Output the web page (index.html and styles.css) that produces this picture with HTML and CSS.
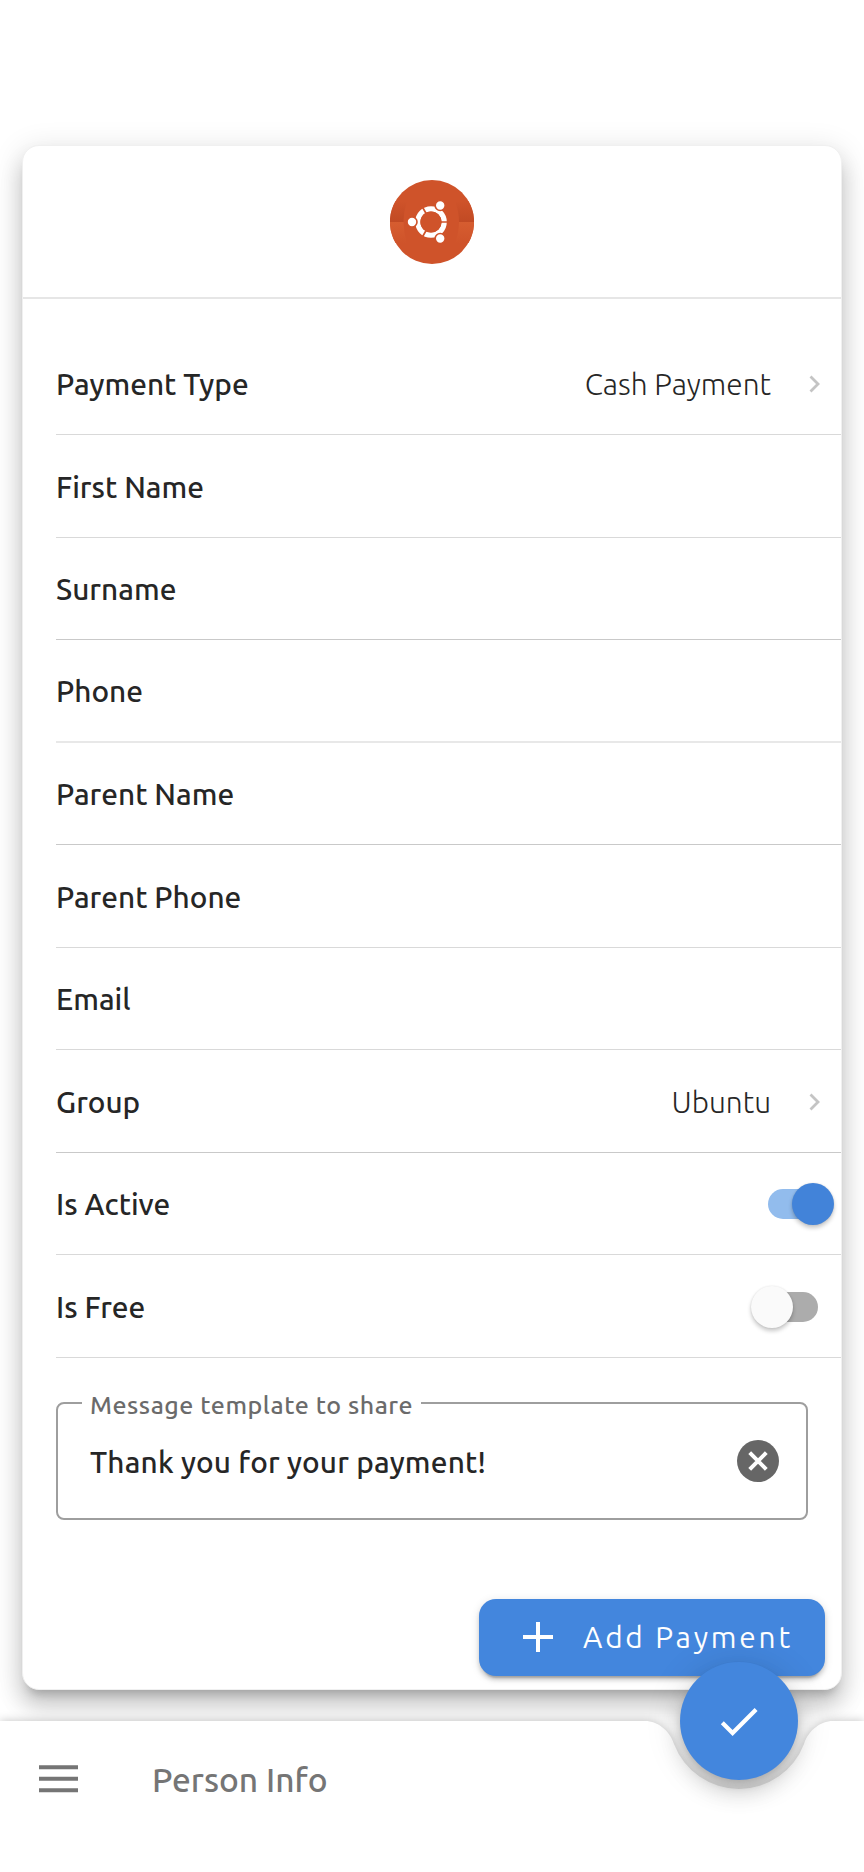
FILE: index.html
```html
<!DOCTYPE html>
<html lang="en">
<head>
<meta charset="utf-8">
<title>Person Info</title>
<link rel="stylesheet" href="styles.css">
</head>
<body>
<div class="screen">
  <main class="card">
    <header class="card-header">
      <svg class="avatar" viewBox="0 0 84 84">
        <defs>
          <linearGradient id="side" x1="0" y1="0" x2="0" y2="1">
            <stop offset="0" stop-color="#cf532a"/><stop offset=".5" stop-color="#c14a24"/>
            <stop offset=".5" stop-color="#d65d30"/><stop offset="1" stop-color="#cf532a"/>
          </linearGradient>
        </defs>
        <circle cx="42" cy="42" r="42" fill="#cf532a"/>
        <path d="M5.500 21H17Q10 42 17 63H5.500A42 42 0 0 1 5.500 21ZM78.500 21H65Q73 42 65 63H78.500A42 42 0 0 0 78.500 21Z" fill="url(#side)"/>
        <circle cx="41" cy="42" r="13.200" fill="none" stroke="#fff" stroke-width="5.200"/>
        <path d="M41 42H60M41 42L31.500 25.500M41 42L31.500 58.500" stroke="#cf532a" stroke-width="1.700"/>
        <circle cx="41" cy="42" r="10.600" fill="#cf532a"/>
        <g fill="#fff" stroke="#cf532a" stroke-width="1.600">
          <circle cx="22" cy="42" r="5"/><circle cx="50.200" cy="25.500" r="5"/><circle cx="50.200" cy="58.500" r="5"/>
        </g>
      </svg>
    </header>
    <section class="rows">
      <div class="row"><span class="label">Payment Type</span><span class="value">Cash Payment</span><svg class="chevron" viewBox="0 0 12 18"><path d="M1.500 1.500L9 9L1.500 16.500"/></svg></div>
      <div class="row"><span class="label">First Name</span></div>
      <div class="row strong"><span class="label">Surname</span></div>
      <div class="row soft"><span class="label">Phone</span></div>
      <div class="row strong"><span class="label">Parent Name</span></div>
      <div class="row"><span class="label">Parent Phone</span></div>
      <div class="row"><span class="label">Email</span></div>
      <div class="row strong"><span class="label">Group</span><span class="value">Ubuntu</span><svg class="chevron" viewBox="0 0 12 18"><path d="M1.500 1.500L9 9L1.500 16.500"/></svg></div>
      <div class="row"><span class="label">Is Active</span><span class="toggle on"><i class="knob"></i></span></div>
      <div class="row"><span class="label">Is Free</span><span class="toggle"><i class="knob"></i></span></div>
    </section>
    <fieldset class="field">
      <legend class="field-label">Message template to share</legend>
      <div class="field-body">
        <span class="field-text">Thank you for your payment!</span>
        <svg class="clear" viewBox="0 0 42 42"><circle cx="21" cy="21" r="21"/><path d="M12.700 12.700L29.300 29.300M29.300 12.700L12.700 29.300"/></svg>
      </div>
    </fieldset>
    <div class="actions">
      <button class="add"><svg class="plus" viewBox="0 0 30 30"><path d="M15 0V30M0 15H30"/></svg><span>Add Payment</span></button>
    </div>
  </main>
  <footer class="bar">
    <svg class="bar-shape" viewBox="0 0 864 151"><path d="M0 0H645C658 0 670 10 674 23A69.500 69.500 0 0 0 804 23C808 10 820 0 833 0H864V151H0Z"/></svg>
    <svg class="menu" viewBox="0 0 39 28"><path d="M0 2.300H39M0 13.800H39M0 25.300H39"/></svg>
    <span class="title">Person Info</span>
    <button class="fab"><svg class="check" viewBox="0 0 118 118"><path d="M42.300 60.800L52.600 71.100L76.100 47.600"/></svg></button>
  </footer>
</div>
</body>
</html>
```
FILE: styles.css
```css
* { box-sizing: border-box; }
body {
  margin: 0;
  background: #fff;
  font-family: Ubuntu, "Noto Sans", sans-serif;
  color: #262626;
}
.screen {
  width: 864px;
  height: 1872px;
  padding-top: 145px;
  display: flex;
  flex-direction: column;
  overflow: hidden;
}
.card {
  margin: 0 22px;
  height: 1545px;
  flex: none;
  border: 1px solid #f0f0f0;
  border-radius: 17px;
  background: #fff;
  box-shadow: 0 10px 10px -6px rgba(0,0,0,.2), 0 17px 21px 2px rgba(0,0,0,.14), 0 6px 29px 4px rgba(0,0,0,.1);
}
.card-header {
  height: 153px;
  padding-top: 1px;
  border-bottom: 2px solid #e6e6e6;
  display: flex;
  justify-content: center;
  align-items: center;
}
.avatar { width: 84px; height: 84px; }
.rows { padding: 33.700px 0 0 33px; }
.row {
  height: 102.500px;
  padding-top: 1.200px;
  border-bottom: 1px solid #d9d9d9;
  display: flex;
  align-items: center;
  font-size: 29.800px;
}
.strong { border-bottom-color: #c9c9c9; }
.soft { border-bottom: 2px solid #e8e8e8; }
.label { font-weight: 500; }
.value { font-weight: 300; margin-left: auto; }
.chevron {
  width: 12px;
  height: 18px;
  margin: 0 20px 0 38px;
  fill: none;
  stroke: #c4c4c4;
  stroke-width: 2.800;
}
.toggle {
  width: 50px;
  height: 30px;
  border-radius: 15px;
  background: #acacac;
  margin: 0 23px 0 auto;
  display: flex;
  align-items: center;
}
.toggle.on { background: #92bced; }
.knob {
  width: 42px;
  height: 42px;
  flex: none;
  border-radius: 50%;
  margin-left: -17px;
  background: #fafafa;
  box-shadow: 0 3px 4px rgba(0,0,0,.22), 0 0 2px rgba(0,0,0,.1);
}
.on .knob { margin-left: 24px; background: #4283d9; }
.field {
  margin: 27.300px 33px 0;
  height: 135px;
  padding: 0;
  border: 2px solid #9e9e9e;
  border-radius: 8px;
}
.field-label {
  margin-left: 24px;
  padding: 4px 8px 0 8px;
  height: 36px;
  line-height: 32px;
  font-size: 25px;
  font-weight: 500;
  letter-spacing: .520px;
  color: #6b6b6b;
  white-space: nowrap;
}
.field-body {
  height: 80px;
  padding: 0 27px 0 32px;
  display: flex;
  align-items: center;
  justify-content: space-between;
}
.field-text {
  padding-top: 2px;
  font-size: 29.800px;
  font-weight: 500;
  letter-spacing: .18px;
}
.clear { width: 42px; height: 42px; fill: #666; }
.clear path { stroke: #fff; stroke-width: 4; }
.actions {
  display: flex;
  justify-content: flex-end;
  padding: 79px 16px 0 0;
}
.add {
  width: 346px;
  height: 77px;
  border: 0;
  border-radius: 17px;
  padding: 0 0 0 44px;
  background: #4386dd;
  color: #fff;
  font: 400 29.800px Ubuntu, "Noto Sans", sans-serif;
  letter-spacing: 2.800px;
  display: flex;
  align-items: center;
  gap: 30px;
  white-space: nowrap;
  box-shadow: 0 6px 2px -4px rgba(0,0,0,.2), 0 4px 4px rgba(0,0,0,.14), 0 2px 10px rgba(0,0,0,.12);
}
.plus { width: 30px; height: 30px; stroke: #fff; stroke-width: 4; }
.bar {
  position: relative;
  height: 151px;
  margin-top: 31px;
  padding: 0 0 35px 39px;
  display: flex;
  align-items: center;
  gap: 74px;
}
.bar-shape {
  position: absolute;
  inset: 0;
  width: 864px;
  height: 151px;
  overflow: visible;
  fill: #fff;
  filter: drop-shadow(0 0 5px rgba(0,0,0,.24));
}
.menu { position: relative; width: 39px; height: 28px; stroke: #757575; stroke-width: 4; }
.title { position: relative; padding-top: 1px; font-size: 33.500px; font-weight: 500; color: #757575; }
.fab {
  position: absolute;
  left: 680px;
  top: -59px;
  width: 118px;
  height: 118px;
  padding: 0;
  border: 0;
  border-radius: 50%;
  background: #4386dd;
  box-shadow: 0 6px 10px -2px rgba(0,0,0,.2), 0 13px 21px rgba(0,0,0,.14), 0 2px 38px rgba(0,0,0,.12);
}
.check { display: block; fill: none; stroke: #fff; stroke-width: 4.200; }
```
